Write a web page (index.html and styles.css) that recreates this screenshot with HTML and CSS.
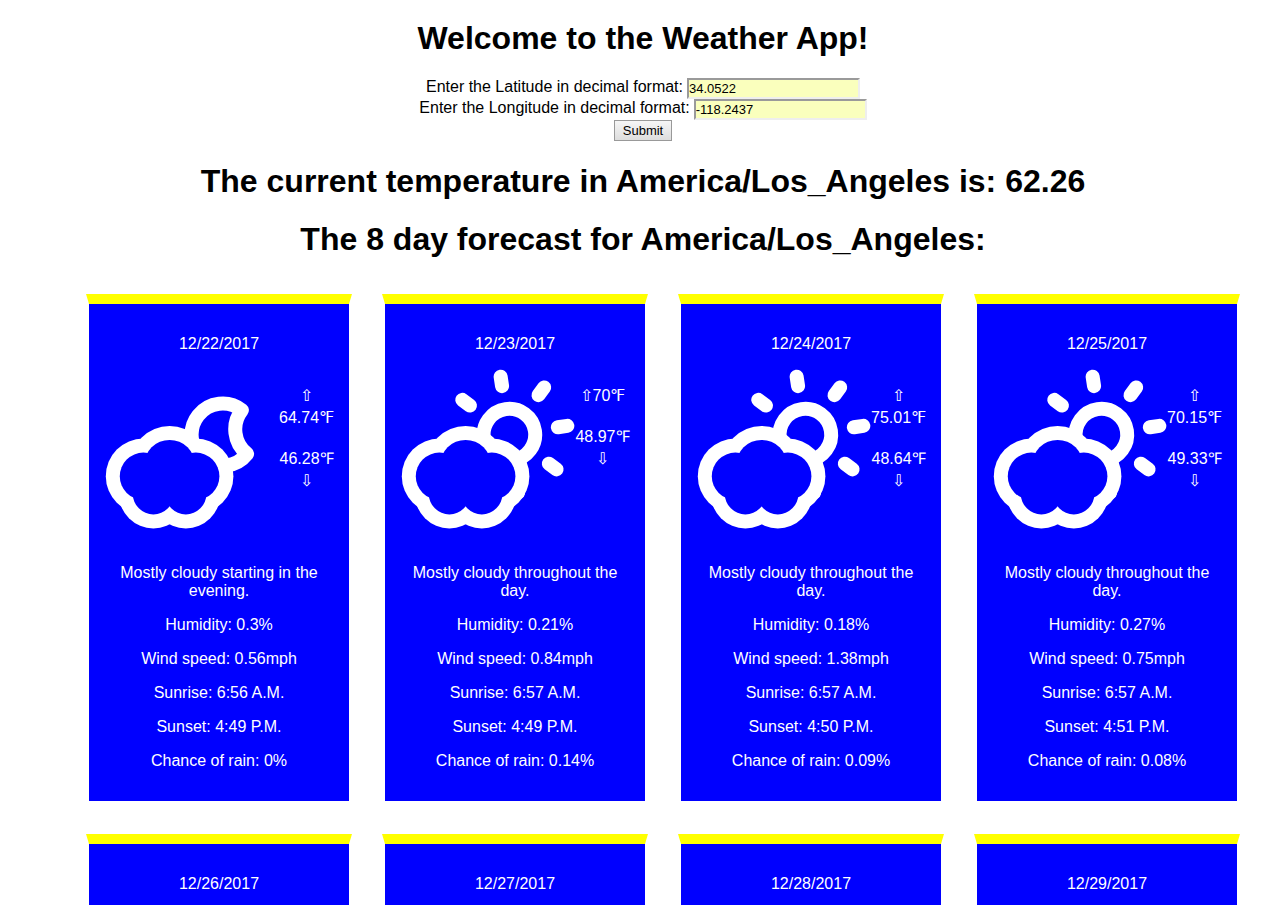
FILE: index.html
```html
<!DOCTYPE html>
<html lang="en">
<head>
<meta charset="utf-8">
<title>Weather App</title>
<link rel="stylesheet" href="styles.css">
</head>
<body>
<svg class="sprite" aria-hidden="true">
  <symbol id="cloud" viewBox="0 0 175 175">
    <g fill="white">
      <circle cx="65.6" cy="96.3" r="39.4"/>
      <circle cx="39.4" cy="107.2" r="37.6"/>
      <circle cx="91.8" cy="107.2" r="37.6"/>
      <circle cx="49.4" cy="124.8" r="34.6"/>
      <circle cx="81.8" cy="124.8" r="34.6"/>
    </g>
    <g fill="blue">
      <circle cx="65.6" cy="96.3" r="25.4"/>
      <circle cx="39.4" cy="107.2" r="23.6"/>
      <circle cx="91.8" cy="107.2" r="23.6"/>
      <circle cx="49.4" cy="124.8" r="20.6"/>
      <circle cx="81.8" cy="124.8" r="20.6"/>
    </g>
  </symbol>
  <symbol id="cloudy-night" viewBox="0 0 175 175">
    <path d="M143.1 84.8A31.06 31.06 0 1 1 137.9 41.2A31.06 31.06 0 0 0 143.1 84.8Z" fill="none" stroke="white" stroke-width="14" stroke-linejoin="round"/>
    <use href="#cloud" width="175" height="175"/>
  </symbol>
  <symbol id="cloudy-day" viewBox="0 0 175 175">
    <g transform="translate(109.4 65.6) rotate(-8.6)" fill="none" stroke="white" stroke-width="14" stroke-linecap="round">
      <circle r="25.8"/>
      <path d="M49 0H58.6"/>
      <path d="M49 0H58.6" transform="rotate(45)"/>
      <path d="M49 0H58.6" transform="rotate(90)"/>
      <path d="M49 0H58.6" transform="rotate(135)"/>
      <path d="M49 0H58.6" transform="rotate(180)"/>
      <path d="M49 0H58.6" transform="rotate(225)"/>
      <path d="M49 0H58.6" transform="rotate(270)"/>
      <path d="M49 0H58.6" transform="rotate(315)"/>
    </g>
    <use href="#cloud" width="175" height="175"/>
  </symbol>
</svg>

<h1 class="heading">Welcome to the Weather App!</h1>
<form class="location">
  <div class="field"><label for="lat">Enter the Latitude in decimal format:</label> <input class="coord" id="lat" type="text" value="34.0522"></div>
  <div class="field"><label for="lng">Enter the Longitude in decimal format:</label> <input class="coord" id="lng" type="text" value="-118.2437"></div>
  <button class="submit" type="submit">Submit</button>
</form>
<h1 class="heading">The current temperature in America/Los_Angeles is: 62.26</h1>
<h1 class="heading">The 8 day forecast for America/Los_Angeles:</h1>

<ul class="forecast">
  <li class="day">
    <p>12/22/2017</p>
    <div class="conditions">
      <svg class="icon" aria-hidden="true"><use href="#cloudy-night"/></svg>
      <div class="temps"><p>⇧ 64.74℉</p><p>46.28℉ ⇩</p></div>
    </div>
    <p>Mostly cloudy starting in the evening.</p>
    <p>Humidity: 0.3%</p>
    <p>Wind speed: 0.56mph</p>
    <p>Sunrise: 6:56 A.M.</p>
    <p>Sunset: 4:49 P.M.</p>
    <p>Chance of rain: 0%</p>
  </li>
  <li class="day">
    <p>12/23/2017</p>
    <div class="conditions">
      <svg class="icon" aria-hidden="true"><use href="#cloudy-day"/></svg>
      <div class="temps"><p>⇧70℉</p><p>48.97℉ ⇩</p></div>
    </div>
    <p>Mostly cloudy throughout the day.</p>
    <p>Humidity: 0.21%</p>
    <p>Wind speed: 0.84mph</p>
    <p>Sunrise: 6:57 A.M.</p>
    <p>Sunset: 4:49 P.M.</p>
    <p>Chance of rain: 0.14%</p>
  </li>
  <li class="day">
    <p>12/24/2017</p>
    <div class="conditions">
      <svg class="icon" aria-hidden="true"><use href="#cloudy-day"/></svg>
      <div class="temps"><p>⇧ 75.01℉</p><p>48.64℉ ⇩</p></div>
    </div>
    <p>Mostly cloudy throughout the day.</p>
    <p>Humidity: 0.18%</p>
    <p>Wind speed: 1.38mph</p>
    <p>Sunrise: 6:57 A.M.</p>
    <p>Sunset: 4:50 P.M.</p>
    <p>Chance of rain: 0.09%</p>
  </li>
  <li class="day">
    <p>12/25/2017</p>
    <div class="conditions">
      <svg class="icon" aria-hidden="true"><use href="#cloudy-day"/></svg>
      <div class="temps"><p>⇧ 70.15℉</p><p>49.33℉ ⇩</p></div>
    </div>
    <p>Mostly cloudy throughout the day.</p>
    <p>Humidity: 0.27%</p>
    <p>Wind speed: 0.75mph</p>
    <p>Sunrise: 6:57 A.M.</p>
    <p>Sunset: 4:51 P.M.</p>
    <p>Chance of rain: 0.08%</p>
  </li>
  <li class="day"><p>12/26/2017</p></li>
  <li class="day"><p>12/27/2017</p></li>
  <li class="day"><p>12/28/2017</p></li>
  <li class="day"><p>12/29/2017</p></li>
</ul>
</body>
</html>
```
FILE: styles.css
```css
body {
  display: flow-root;
  margin: 0 8px;
  background: white;
  color: black;
  font: 16px/18px "Liberation Sans", Arial, sans-serif;
  text-align: center;
}

.sprite {
  position: absolute;
  width: 0;
  height: 0;
}

.heading {
  margin: 20px 0 22px;
  font-size: 32px;
  line-height: 36px;
}

.location {
  margin: 22px 0;
}

.field {
  display: flex;
  justify-content: center;
  align-items: flex-start;
  gap: 4px;
}

.coord {
  box-sizing: border-box;
  width: 173px;
  height: 21px;
  padding: 1px 0;
  border: 2px solid;
  border-color: #9a9a9a #eee #eee #9a9a9a;
  background: #faffbd;
  color: black;
  font: 13px "Liberation Sans", Arial, sans-serif;
}

.submit {
  display: block;
  box-sizing: border-box;
  height: 21px;
  margin: 0 auto;
  padding: 1px 8px;
  border: 1px solid #999;
  background: linear-gradient(#f6f6f6, #dddddd);
  color: black;
  font: 13px "Liberation Sans", Arial, sans-serif;
}

.forecast {
  display: grid;
  grid-template-columns: repeat(auto-fill, 266px);
  grid-auto-rows: 1fr;
  justify-content: center;
  gap: 30px;
  margin: 0;
  padding: 15px 15px 15px 55px;
  list-style: none;
}

.day {
  padding: 15px;
  border: 3px solid white;
  border-top: 10px solid yellow;
  background: blue;
  background-clip: padding-box;
  color: white;
}

.day p {
  margin: 16px 0;
}

.conditions {
  display: flex;
  align-items: flex-start;
  padding-bottom: 4px;
}

.icon {
  flex: none;
  width: 175px;
  height: 175px;
}

.temps {
  flex: 1;
  line-height: 22px;
}

.temps p {
  margin: 16px 0 19px;
}
```
